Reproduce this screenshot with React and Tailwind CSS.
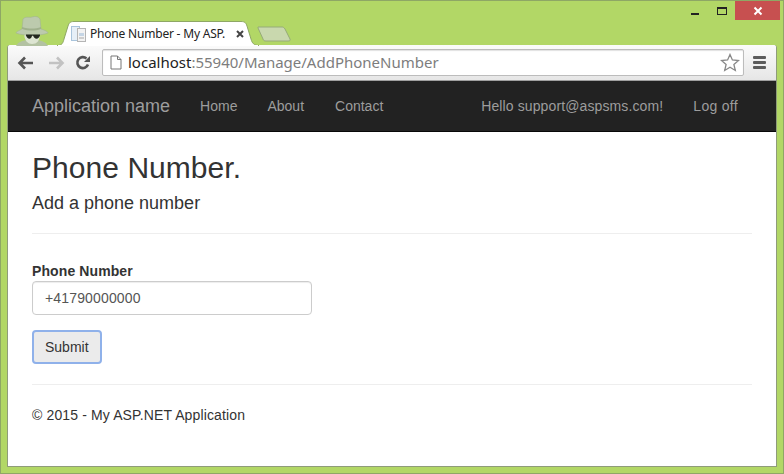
import React from "react";

const sans = { fontFamily: '"Liberation Sans", Arial, sans-serif' };

function Spy() {
  return (
    <svg width="36" height="30" viewBox="0 0 36 30" className="shrink-0">
      <path d="M2 30 C4 26 8 25 12 24 L24 24 C28 25 32 26 34 30 Z" fill="#b3c2a2" />
      <path d="M10 16 C10 25 14 28 18 28 C23 28 26 25 26 16 Z" fill="#dde5d2" />
      <path d="M9 3 C12 0 15 2 18 1 C21 0 24 0 26 3 L27 13 C31 14 34 16 34 17 C27 20 9 20 2 17 C2 16 6 14 8 13 Z" fill="#bccaad" stroke="#a3b392" strokeWidth="0.6" />
      <path d="M8 11 C15 13 21 13 27 11 L27 13 C21 15 15 15 8 13 Z" fill="#9fb08d" />
      <path d="M12 19 L18 19 C18 24 13 24 12 19 Z M19 19 L26 19 C25 24 20 24 19 19 Z" fill="#23281f" />
      <rect x="12" y="18.5" width="14" height="1.2" fill="#23281f" />
    </svg>
  );
}

function Favicon() {
  return (
    <svg width="16" height="16" viewBox="0 0 16 16" className="shrink-0">
      <rect x="0.5" y="0.5" width="8" height="14" fill="#e6eff7" stroke="#a9c4dc" />
      <rect x="6.5" y="2.5" width="8" height="13" fill="#f3f3f3" stroke="#b5b5b5" />
      <rect x="8" y="7" width="5" height="3" fill="#c5d5e5" />
      <rect x="8" y="11" width="5" height="2" fill="#cdcdcd" />
    </svg>
  );
}

function Tab() {
  return (
    <div className="relative w-[202px] h-[24px] ml-[56px] self-end">
      <svg width="202" height="25" viewBox="0 0 202 25" className="absolute left-0 top-0">
        <path d="M0 24.5 C5 24.5 6 22 7 18 L11 5 C12 2 13 0.5 17 0.5 L184 0.5 C188 0.5 189 2 190 5 L194 18 C195 22 197 24.5 202 24.5" fill="#ffffff" stroke="#8ea765" />
        <rect x="1" y="24" width="200" height="1" fill="#ffffff" />
      </svg>
      <div className="relative flex items-center h-[24px] pl-[14px] pt-[2px]">
        <Favicon />
        <span className="ml-[3px] w-[139px] whitespace-nowrap text-[12px] tracking-[-0.2px] text-[#222]" style={{ fontFamily: '"Noto Sans", sans-serif' }}>
          Phone Number - My ASP.
        </span>
        <svg width="10" height="10" viewBox="0 0 10 10" className="ml-[6px]">
          <path d="M2 2 L8 8 M8 2 L2 8" stroke="#444" strokeWidth="2" />
        </svg>
      </div>
    </div>
  );
}

function NewTab() {
  return (
    <svg width="34" height="16" viewBox="0 0 34 16" className="self-end mb-[3px] ml-[-2px] shrink-0">
      <path d="M1 1 L25 1 C26 1 27 1.5 28 3 L33 13 C33.5 14.5 33 15 31 15 L9 15 C7 15 6.5 14.5 6 13 L1 2 Z" fill="#c9d8ae" stroke="#96ab78" />
    </svg>
  );
}

function WindowControls() {
  return (
    <div className="flex items-start ml-auto mr-[3px]">
      <div className="w-[28px] h-[14px] flex justify-center items-end">
        <div className="w-[8px] h-[2px] bg-[#222]" />
      </div>
      <div className="w-[26px] h-[14px] flex justify-center pt-[6px]">
        <div className="w-[10px] h-[8px] border border-[#222] border-t-2" />
      </div>
      <div className="w-[45px] h-[19px] bg-[#c75050] flex items-center justify-center">
        <svg width="10" height="10" viewBox="0 0 10 10">
          <path d="M1.5 1.5 L8.5 8.5 M8.5 1.5 L1.5 8.5" stroke="#fff" strokeWidth="2" />
        </svg>
      </div>
    </div>
  );
}

function Toolbar() {
  return (
    <div className="h-[36px] flex items-center bg-gradient-to-b from-[#fbfbfb] to-[#e6e6e6] rounded-t-[3px] border-b border-[#a0a0a0] shrink-0">
      <svg width="18" height="14" viewBox="0 0 18 14" className="ml-[9px]">
        <path d="M8 1.5 L2.5 7 L8 12.5 M3 7 L16 7" fill="none" stroke="#555" strokeWidth="2.6" />
      </svg>
      <svg width="18" height="14" viewBox="0 0 18 14" className="ml-[12px]">
        <path d="M10 1.5 L15.5 7 L10 12.5 M15 7 L2 7" fill="none" stroke="#c2c2c2" strokeWidth="2.6" />
      </svg>
      <svg width="16" height="16" viewBox="0 0 16 16" className="ml-[10px]">
        <path d="M13 9.5 A5.5 5.5 0 1 1 11.5 3.5" fill="none" stroke="#555" strokeWidth="2.6" />
        <path d="M9 7 L15 7 L15 1 Z" fill="#555" />
      </svg>
      <div className="ml-[11px] w-[642px] h-[27px] bg-white border border-[#bcbcbc] rounded-[2px] flex items-center shadow-[inset_0_1px_1px_rgba(0,0,0,0.12)]">
        <svg width="12" height="15" viewBox="0 0 12 15" className="ml-[7px]">
          <path d="M1 1 L7.5 1 L11 4.5 L11 14 L1 14 Z M7.5 1 L7.5 4.5 L11 4.5" fill="#fff" stroke="#777" />
        </svg>
        <span className="ml-[6px] text-[15px] text-[#7d7d7d] whitespace-nowrap" style={{ fontFamily: '"Noto Sans", sans-serif' }}>
          <span className="text-[#222]">localhost</span>:55940/Manage/AddPhoneNumber
        </span>
        <svg width="20" height="19" viewBox="0 0 20 19" className="ml-auto mr-[3px]">
          <path d="M10 1.5 L12.4 7 L18.5 7.5 L13.9 11.5 L15.3 17.5 L10 14.3 L4.7 17.5 L6.1 11.5 L1.5 7.5 L7.6 7 Z" fill="#fff" stroke="#888" strokeWidth="1.3" />
        </svg>
      </div>
      <div className="ml-[9px] flex flex-col gap-[2px]">
        <div className="w-[13px] h-[3px] bg-[#5c5c5c] rounded-[1px]" />
        <div className="w-[13px] h-[3px] bg-[#5c5c5c] rounded-[1px]" />
        <div className="w-[13px] h-[3px] bg-[#5c5c5c] rounded-[1px]" />
      </div>
    </div>
  );
}

function Navbar() {
  return (
    <div className="h-[51px] bg-[#222222] border-b border-[#080808] flex items-center text-[14px] text-[#9d9d9d] shrink-0">
      <span className="ml-[24px] text-[18px]">Application name</span>
      <span className="ml-[30px]">Home</span>
      <span className="ml-[30px]">About</span>
      <span className="ml-[31px]">Contact</span>
      <span className="ml-auto tracking-[0.12px]">Hello support@aspsms.com!</span>
      <span className="ml-[30px] mr-[38px] tracking-[0.3px]">Log off</span>
    </div>
  );
}

export default function App() {
  return (
    <div className="w-[784px] h-[474px] bg-[#b2d766] border border-[#8ea765] flex flex-col overflow-hidden box-border" style={sans}>
      <div className="h-[44px] flex items-start shrink-0 relative">
        <div className="absolute left-[13px] top-[15px]"><Spy /></div>
        <div className="flex h-full w-full items-start">
          <div className="flex h-full items-end">
            <Tab />
            <NewTab />
          </div>
          <WindowControls />
        </div>
      </div>
      <div className="ml-[6px] mb-[6px] flex-1 flex flex-col bg-white border-x border-b border-[#8f9c7a] rounded-t-[3px] min-h-0 w-[768px] box-content">
        <Toolbar />
        <Navbar />
        <div className="px-[24px] text-[#333333] flex-1">
          <h2 className="text-[30px] leading-[33px] mt-[19px] font-normal tracking-[0.05px]">Phone Number.</h2>
          <h4 className="text-[18px] leading-[20px] mt-[9px] font-normal">Add a phone number</h4>
          <hr className="mt-[20px] border-t border-[#eeeeee]" />
          <label className="block mt-[27px] text-[14px] leading-[20px] font-bold tracking-[0.1px]">Phone Number</label>
          <div className="w-[280px] h-[34px] border border-[#cccccc] rounded-[4px] px-[12px] flex items-center text-[14px] tracking-[0.15px] text-[#555555] shadow-[inset_0_1px_1px_rgba(0,0,0,0.075)]">
            +41790000000
          </div>
          <button className="block mt-[15px] h-[34px] px-[11px] border-2 border-[#8fb1ea] rounded-[4px] bg-[#ebebeb] text-[14px] text-[#333333]">
            Submit
          </button>
          <hr className="mt-[20px] border-t border-[#eeeeee]" />
          <p className="mt-[20px] text-[14px] leading-[20px] tracking-[0.13px]">© 2015 - My ASP.NET Application</p>
        </div>
      </div>
    </div>
  );
}
